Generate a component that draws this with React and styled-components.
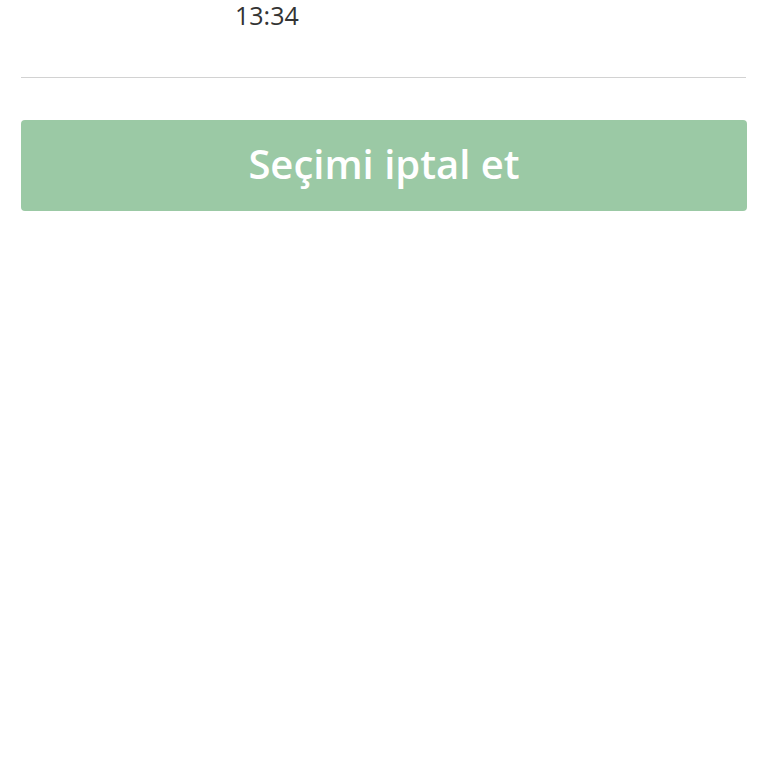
import React from 'react';
import styled, { createGlobalStyle } from 'styled-components';

const GlobalStyle = createGlobalStyle`
  html, body {
    margin: 0;
    padding: 0;
    background: #fff;
    font-family: "Open Sans", "Liberation Sans", sans-serif;
  }
`;

const Page = styled.div`
  display: flex;
  flex-direction: column;
  padding: 0 21px;
`;

const TimeRow = styled.div`
  display: flex;
  padding-left: 214px;
  font-size: 25px;
  line-height: 30px;
  color: #333;
`;

const Divider = styled.hr`
  margin: 47px 1px 0 0;
  border: 0;
  height: 1px;
  background: #d2d2d2;
`;

const CancelButton = styled.button`
  margin-top: 42px;
  height: 91px;
  border: 0;
  border-radius: 4px;
  background: #9bc9a5;
  color: #fff;
  font-family: "Open Sans", "Liberation Sans", sans-serif;
  font-size: 40px;
  font-weight: 600;
  display: flex;
  align-items: center;
  justify-content: center;
  padding: 0 0 4px;
  cursor: pointer;
`;

export default function App() {
  return (
    <>
      <GlobalStyle />
      <Page>
        <TimeRow>13:34</TimeRow>
        <Divider />
        <CancelButton type="button">Seçimi iptal et</CancelButton>
      </Page>
    </>
  );
}
